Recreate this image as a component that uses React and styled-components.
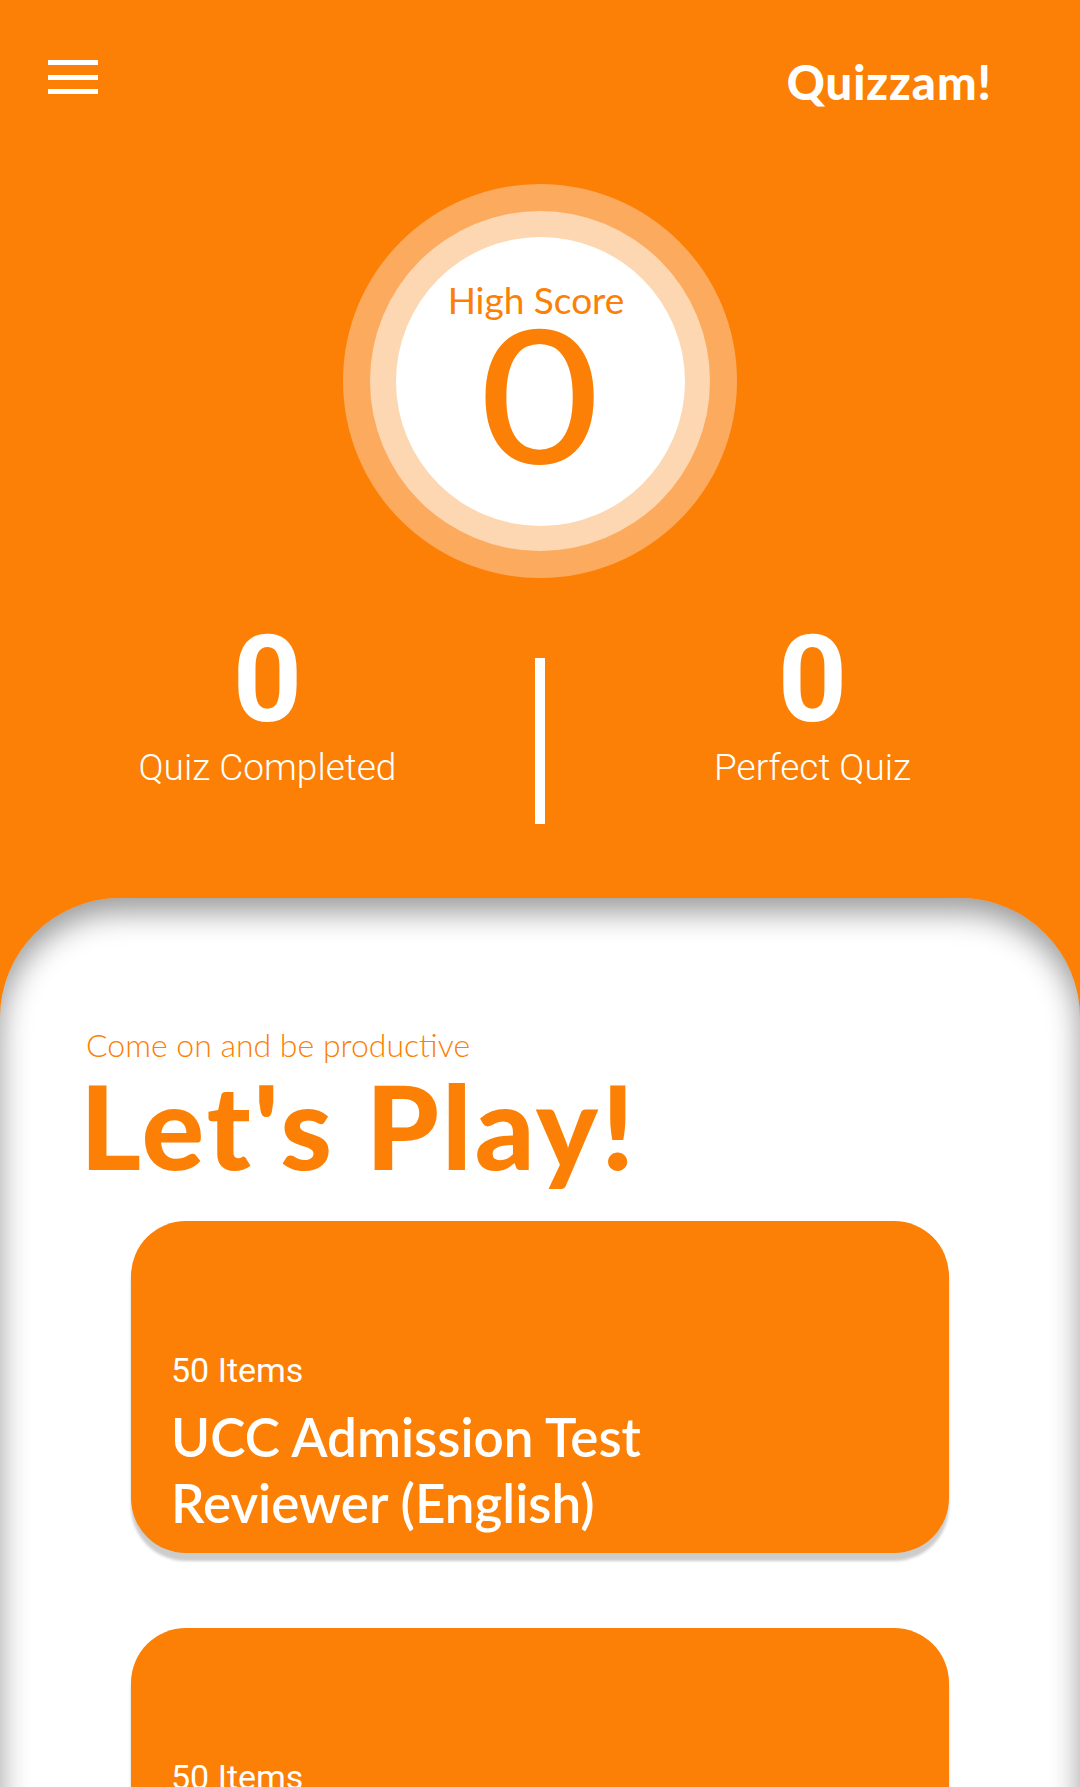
import React from "react";
import styled, { createGlobalStyle } from "styled-components";

const orange = "#fb8005";

const GlobalStyle = createGlobalStyle`
  html, body {
    margin: 0;
    padding: 0;
    background: ${orange};
  }
  ::-webkit-scrollbar {
    display: none;
  }
  * {
    box-sizing: border-box;
  }
`;

const quizzes = [
  { id: 1, items: 50, title: "UCC Admission Test Reviewer (English)" },
  { id: 2, items: 50, title: "UCC Admission Test Reviewer (Math)" },
];

const App = () => {
  return (
    <>
      <GlobalStyle />
      <Page>
        <Header>
          <Burger aria-label="menu">
            <span />
            <span />
            <span />
          </Burger>
          <Logo>Quizzam!</Logo>
        </Header>

        <OuterRing>
          <MiddleRing>
            <ScoreCircle>
              <ScoreLabel>High Score</ScoreLabel>
              <ScoreValue>0</ScoreValue>
            </ScoreCircle>
          </MiddleRing>
        </OuterRing>

        <Stats>
          <Stat>
            <StatValue>0</StatValue>
            <StatLabel>Quiz Completed</StatLabel>
          </Stat>
          <Divider />
          <Stat>
            <StatValue>0</StatValue>
            <StatLabel>Perfect Quiz</StatLabel>
          </Stat>
        </Stats>

        <Panel>
          <Intro>
            <Tagline>Come on and be productive</Tagline>
            <Heading>Let's Play!</Heading>
          </Intro>
          <CardList>
            {quizzes.map((q) => (
              <Card key={q.id}>
                <Items>{q.items} Items</Items>
                <CardTitle>{q.title}</CardTitle>
              </Card>
            ))}
          </CardList>
        </Panel>
      </Page>
    </>
  );
};

const Page = styled.div`
  min-height: 1787px;
  display: flex;
  flex-direction: column;
  background: ${orange};
  overflow: hidden;
`;

const Header = styled.header`
  display: flex;
  justify-content: space-between;
  align-items: flex-start;
  padding: 59px 88px 0 48px;
`;

const Burger = styled.button`
  display: flex;
  flex-direction: column;
  gap: 9.5px;
  width: 50px;
  margin-top: 1px;
  padding: 0;
  border: none;
  background: none;
  cursor: pointer;

  span {
    display: block;
    height: 5px;
    background: #fff;
  }
`;

const Logo = styled.h1`
  margin: 0;
  font-family: "Lato", "Noto Sans", sans-serif;
  font-weight: 900;
  font-size: 47px;
  line-height: 1;
  letter-spacing: 1px;
  color: #fff;
`;

const OuterRing = styled.div`
  align-self: center;
  margin-top: 78px;
  width: 394px;
  height: 394px;
  border-radius: 50%;
  background: #fcaa5d;
  display: flex;
  align-items: center;
  justify-content: center;
`;

const MiddleRing = styled.div`
  width: 340px;
  height: 340px;
  border-radius: 50%;
  background: #fdd7b1;
  display: flex;
  align-items: center;
  justify-content: center;
`;

const ScoreCircle = styled.div`
  width: 289px;
  height: 289px;
  border-radius: 50%;
  background: #fff;
  display: flex;
  flex-direction: column;
  align-items: center;
  padding-top: 44px;
  color: ${orange};
  font-family: "Lato", "Noto Sans", sans-serif;
`;

const ScoreLabel = styled.div`
  font-size: 37px;
  line-height: 1;
  font-weight: 400;
  margin-left: -8px;
`;

const ScoreValue = styled.div`
  margin-top: -18px;
  font-size: 185px;
  line-height: 1;
  font-weight: 500;
  transform: scaleX(1.12);
`;

const Stats = styled.section`
  display: grid;
  grid-template-columns: 1fr 10px 1fr;
  margin-top: 42px;
  height: 204px;
  color: #fff;
  font-family: "Roboto", sans-serif;
`;

const Stat = styled.div`
  display: flex;
  flex-direction: column;
  align-items: center;
`;

const StatValue = styled.div`
  font-size: 121px;
  font-weight: 700;
  line-height: 1;
`;

const StatLabel = styled.div`
  margin-top: 8px;
  font-size: 37px;
  font-weight: 300;
  line-height: 1;
`;

const Divider = styled.div`
  margin-top: 38px;
  height: 166px;
  background: #fff;
`;

const Panel = styled.main`
  flex: 1;
  margin-top: 74px;
  background: #fff;
  border-radius: 120px 120px 0 0;
  box-shadow: inset 0 14px 30px rgba(0, 0, 0, 0.4);
  padding: 131px 0 60px;
`;

const Intro = styled.div`
  padding-left: 86px;
  color: ${orange};
  font-family: "Lato", "Noto Sans", sans-serif;
`;

const Tagline = styled.p`
  margin: 0;
  font-size: 32px;
  font-weight: 300;
  line-height: 1;
`;

const Heading = styled.h2`
  margin: 6px 0 0 -6px;
  font-size: 117px;
  font-weight: 900;
  line-height: 1;
  letter-spacing: 3px;
`;

const CardList = styled.div`
  margin-top: 37px;
  display: flex;
  flex-direction: column;
  align-items: center;
  gap: 75px;
`;

const Card = styled.article`
  width: 818px;
  height: 332px;
  border-radius: 55px;
  background: ${orange};
  box-shadow: 0 8px 3px rgba(0, 0, 0, 0.2);
  display: flex;
  flex-direction: column;
  justify-content: flex-end;
  padding: 0 40px 17px;
  color: #fff;
  cursor: pointer;
`;

const Items = styled.div`
  font-family: "Roboto", sans-serif;
  font-size: 34px;
  font-weight: 400;
  line-height: 1;
`;

const CardTitle = styled.h3`
  margin: 17px 0 0;
  max-width: 540px;
  font-family: "Lato", "Noto Sans", sans-serif;
  font-size: 53px;
  font-weight: 600;
  line-height: 66px;
`;

export default App;
